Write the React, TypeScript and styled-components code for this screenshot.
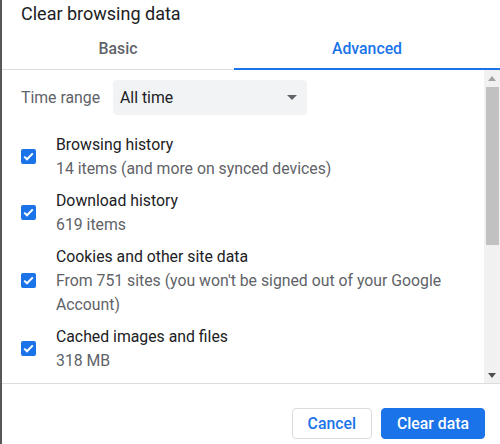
import React, { FC } from "react";
import styled, { createGlobalStyle } from "styled-components";

const GlobalStyle = createGlobalStyle`
  html, body {
    margin: 0;
    padding: 0;
    background: #ffffff;
  }
  body {
    font-family: Roboto, "Noto Sans", "Liberation Sans", sans-serif;
  }
`;

const TEXT = "15.8px";

const Dialog = styled.div`
  width: 500px;
  height: 444px;
  box-sizing: border-box;
  border-left: 2px solid #575757;
  display: flex;
  flex-direction: column;
  overflow: hidden;
  background: #ffffff;
  color: #202124;
`;

const Title = styled.div`
  height: 30px;
  padding-left: 19px;
  font-size: 18px;
  line-height: 28px;
  color: #202124;
`;

const TabBar = styled.div`
  display: flex;
  height: 39px;
  border-bottom: 1px solid #dadce0;
`;

const Tab = styled.div<{ $active?: boolean; $width?: string }>`
  flex: ${({ $width }) => ($width ? `0 0 ${$width}` : "1")};
  display: flex;
  align-items: center;
  justify-content: center;
  box-sizing: border-box;
  padding-bottom: 1px;
  font-size: ${TEXT};
  font-weight: 500;
  color: ${({ $active }) => ($active ? "#1a73e8" : "#5f6368")};
  border-bottom: 2px solid ${({ $active }) => ($active ? "#1a73e8" : "transparent")};
  margin-bottom: -1px;
`;

const Body = styled.div`
  display: flex;
  height: 313px;
`;

const Content = styled.div`
  flex: 1;
  overflow: hidden;
  padding: 10px 0 0 19px;
`;

const RangeRow = styled.div`
  display: flex;
  align-items: center;
  gap: 13px;
  margin-bottom: 18px;
`;

const Label = styled.span`
  font-size: ${TEXT};
  color: #5f6368;
`;

const Select = styled.div`
  width: 194px;
  height: 35px;
  box-sizing: border-box;
  display: flex;
  align-items: center;
  justify-content: space-between;
  padding: 0 10px 0 7px;
  background: #f1f3f4;
  border-radius: 4px;
  font-size: ${TEXT};
  color: #202124;
`;

const Arrow = styled.span`
  width: 0;
  height: 0;
  border-left: 5px solid transparent;
  border-right: 5px solid transparent;
  border-top: 5px solid #5f6368;
`;

const OptionList = styled.div`
  display: flex;
  flex-direction: column;
  gap: 8px;
`;

const Option = styled.div`
  display: flex;
  align-items: center;
  gap: 20px;
`;

const Box = styled.span`
  flex: 0 0 15px;
  width: 15px;
  height: 15px;
  margin-top: -1px;
  border-radius: 2px;
  background: #1a73e8;
  display: flex;
  align-items: center;
  justify-content: center;
`;

const Lines = styled.div`
  display: flex;
  flex-direction: column;
  font-size: ${TEXT};
  line-height: 24px;
  padding-right: 12px;
`;

const Primary = styled.div`
  color: #202124;
`;

const Secondary = styled.div`
  color: #5f6368;
`;

const Scrollbar = styled.div`
  flex: 0 0 16px;
  display: flex;
  flex-direction: column;
  background: #f1f1f1;
`;

const ScrollButton = styled.div<{ $dark?: boolean }>`
  height: 16px;
  display: flex;
  align-items: center;
  justify-content: center;
  color: ${({ $dark }) => ($dark ? "#505050" : "#a3a3a3")};
`;

const Thumb = styled.div`
  height: 158px;
  margin: 1px 1px 0 2px;
  background: #c1c1c1;
`;

const Track = styled.div`
  flex: 1;
`;

const Footer = styled.div`
  flex: 1;
  border-top: 1px solid #dadce0;
  display: flex;
  justify-content: flex-end;
  align-items: flex-start;
  gap: 9px;
  padding: 24px 15px 0 0;
`;

const Button = styled.button<{ $primary?: boolean }>`
  height: 31px;
  padding: 0 15px;
  border-radius: 4px;
  font-family: inherit;
  font-size: ${TEXT};
  font-weight: 500;
  cursor: pointer;
  border: 1px solid ${({ $primary }) => ($primary ? "#1a73e8" : "#dadce0")};
  background: ${({ $primary }) => ($primary ? "#1a73e8" : "#ffffff")};
  color: ${({ $primary }) => ($primary ? "#ffffff" : "#1a73e8")};
`;

const Check: FC = () => (
  <Box>
    <svg width="11" height="9" viewBox="0 0 11 9">
      <path d="M1.2 4.6 L4 7.3 L9.8 1.4" fill="none" stroke="#ffffff" strokeWidth="2" />
    </svg>
  </Box>
);

const Triangle: FC<{ up?: boolean }> = ({ up }) => (
  <svg width="8" height="5" viewBox="0 0 8 5">
    <path d={up ? "M0 5 L4 0 L8 5 Z" : "M0 0 L8 0 L4 5 Z"} fill="currentColor" />
  </svg>
);

const options = [
  { title: "Browsing history", details: ["14 items (and more on synced devices)"] },
  { title: "Download history", details: ["619 items"] },
  {
    title: "Cookies and other site data",
    details: ["From 751 sites (you won't be signed out of your Google", "Account)"],
  },
  { title: "Cached images and files", details: ["318 MB"] },
];

export default function App() {
  return (
    <>
      <GlobalStyle />
      <Dialog>
        <Title>Clear browsing data</Title>

        <TabBar>
          <Tab $width="232px">Basic</Tab>
          <Tab $active>Advanced</Tab>
        </TabBar>

        <Body>
          <Content>
            <RangeRow>
              <Label>Time range</Label>
              <Select>
                All time
                <Arrow />
              </Select>
            </RangeRow>

            <OptionList>
              {options.map((opt) => (
                <Option key={opt.title}>
                  <Check />
                  <Lines>
                    <Primary>{opt.title}</Primary>
                    {opt.details.map((d) => (
                      <Secondary key={d}>{d}</Secondary>
                    ))}
                  </Lines>
                </Option>
              ))}
            </OptionList>
          </Content>

          {/* fake classic scrollbar, headless hides real ones */}
          <Scrollbar>
            <ScrollButton>
              <Triangle up />
            </ScrollButton>
            <Thumb />
            <Track />
            <ScrollButton $dark>
              <Triangle />
            </ScrollButton>
          </Scrollbar>
        </Body>

        <Footer>
          <Button>Cancel</Button>
          <Button $primary>Clear data</Button>
        </Footer>
      </Dialog>
    </>
  );
}
